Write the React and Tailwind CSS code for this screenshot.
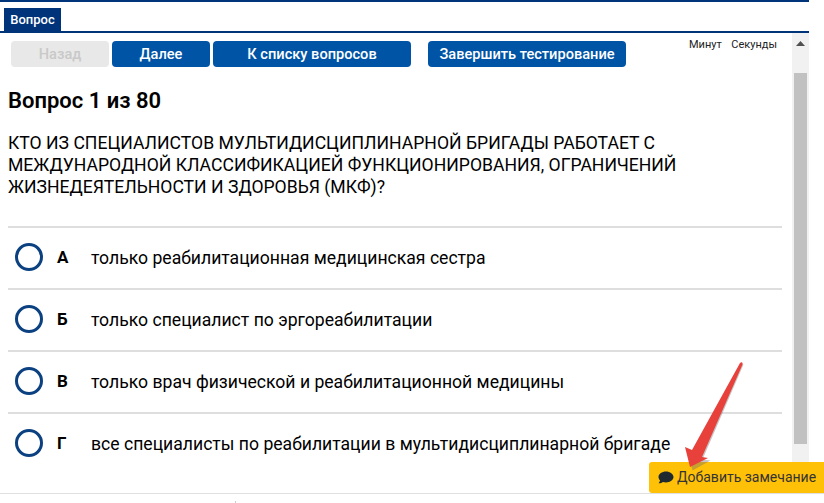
import React from "react";

const options = [
  ["А", "только реабилитационная медицинская сестра"],
  ["Б", "только специалист по эргореабилитации"],
  ["В", "только врач физической и реабилитационной медицины"],
  ["Г", "все специалисты по реабилитации в мультидисциплинарной бригаде"],
];

function Btn({ className, children }) {
  return (
    <div className={"h-[26px] rounded-[4px] flex items-center justify-center text-[14.6px] font-medium pt-px " + className}>
      {children}
    </div>
  );
}

export default function App() {
  return (
    <div className="relative w-[824px] h-[503px] overflow-hidden bg-white font-['Roboto',sans-serif] text-black">
      <div className="h-[33px] w-[809px] border-t-2 border-b-2 border-[#00347a] pt-[6px] pl-[4px]">
        <div className="w-[57px] h-[23px] bg-[#00347a] text-white text-[13px] font-medium flex items-center justify-center">
          Вопрос
        </div>
      </div>

      <div className="flex w-[809px] h-[460px]">
        <div className="flex-1 min-w-0 relative">
          <div className="flex pt-[8px] pl-[11px] gap-[3px]">
            <Btn className="w-[98px] bg-[#e8e8e8] text-[#c9c9c9]">Назад</Btn>
            <Btn className="w-[98px] bg-[#0054a6] text-white">Далее</Btn>
            <Btn className="w-[198px] bg-[#0054a6] text-white">К списку вопросов</Btn>
            <Btn className="w-[198px] ml-[14px] bg-[#0054a6] text-white">Завершить тестирование</Btn>
            <div className="ml-[60px] -mt-[3px] flex gap-[9.5px] text-[11px] leading-[14px] text-[#222]">
              <span>Минут</span>
              <span>Секунды</span>
            </div>
          </div>

          <h1 className="mt-[21px] ml-[8px] text-[22px] leading-[26px] font-semibold">Вопрос 1 из 80</h1>
          <p className="mt-[18px] ml-[8px] w-[700px] text-[17.6px] leading-[22px]">
            КТО ИЗ СПЕЦИАЛИСТОВ МУЛЬТИДИСЦИПЛИНАРНОЙ БРИГАДЫ РАБОТАЕТ С МЕЖДУНАРОДНОЙ КЛАССИФИКАЦИЕЙ ФУНКЦИОНИРОВАНИЯ, ОГРАНИЧЕНИЙ ЖИЗНЕДЕЯТЕЛЬНОСТИ И ЗДОРОВЬЯ (МКФ)?
          </p>

          <div className="mt-[28px] ml-[8px] w-[774px]">
            {options.map(([letter, text]) => (
              <div key={letter} className="h-[62px] border-t-2 border-[#dedede] flex items-center pl-[8px]">
                <div className="w-[28px] h-[28px] -ml-px -mt-[2px] mr-px rounded-full border-[3px] border-[#0b4180] shrink-0" />
                <div className="w-[48px] pl-[13px] text-[17px] font-bold -mt-px">{letter}</div>
                <div className="text-[17.6px] -ml-px">{text}</div>
              </div>
            ))}
          </div>
        </div>

        <div className="w-[17px] bg-[#f1f1f1] relative flex flex-col items-center">
          <svg width="9" height="5" viewBox="0 0 9 5" className="mt-[8px]">
            <path d="M0 5 L4.5 0 L9 5 Z" fill="#505050" />
          </svg>
          <div className="mt-[27px] w-[13px] h-[371px] bg-[#c1c1c1]" />
        </div>
      </div>

      <div className="w-[824px] h-[10px] border-t border-[#e0e0e0] relative">
        <div className="absolute left-[235px] top-[7px] w-px h-[3px] bg-[#cccccc]" />
      </div>

      <div className="absolute left-[649px] top-[462px] w-[175px] h-[31px] bg-[#ffc107] rounded-l-[3px] flex items-center pl-[9px] text-[14px] text-[#333]">
        <svg width="16" height="13" viewBox="0 0 16 13" className="mr-[3px] shrink-0">
          <path d="M8 0.5C3.9 0.5 0.5 2.9 0.5 6c0 1.3.6 2.5 1.6 3.5C1.8 10.6 1 11.6.6 12.2c2 0 3.4-.7 4.3-1.3.9.3 2 .5 3.1.5 4.1 0 7.5-2.4 7.5-5.4S12.1.5 8 .5z" fill="#1f2a30" />
        </svg>
        Добавить замечание
      </div>

      <svg className="absolute left-[680px] top-[355px] pointer-events-none" width="70" height="125" viewBox="0 0 70 125">
        <path d="M62 8 L21 103 L29 104 L11 114 L6 93 L12 96 L59 7 Z" fill="#6e6e6e" opacity="0.4" transform="translate(1.5,1.5)" />
        <path d="M60 8 C61.5 6.5 63 7.5 62.5 9.5 L22 102 L28 103 L10 112 L5 92 L12 95 Z" fill="#e8403a" />
      </svg>
    </div>
  );
}
